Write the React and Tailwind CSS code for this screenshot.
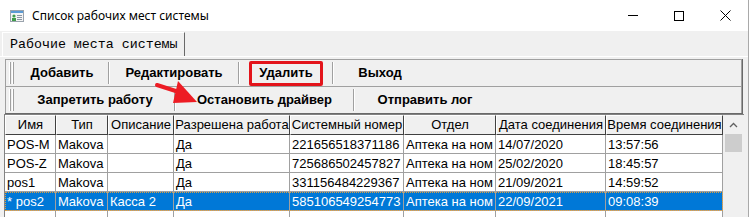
import React from 'react';

const COLS = [
  { title: 'Имя', w: 51 },
  { title: 'Тип', w: 52 },
  { title: 'Описание', w: 66 },
  { title: 'Разрешена работа', w: 116 },
  { title: 'Системный номер', w: 114 },
  { title: 'Отдел', w: 92 },
  { title: 'Дата соединения', w: 110 },
  { title: 'Время соединения', w: 117 },
];

const ROWS = [
  ['POS-M', 'Makova', '', 'Да', '221656518371186', 'Аптека на ном', '14/07/2020', '13:57:56'],
  ['POS-Z', 'Makova', '', 'Да', '725686502457827', 'Аптека на ном', '25/02/2020', '18:45:57'],
  ['pos1', 'Makova', '', 'Да', '331156484229367', 'Аптека на ном', '21/09/2021', '14:59:52'],
  ['* pos2', 'Makova', 'Касса 2', 'Да', '585106549254773', 'Аптека на ном', '22/09/2021', '09:08:39'],
  ['', '', '', '', '', '', '', ''],
];

function Handle() {
  return (
    <div className="flex h-full items-center gap-[1px] pl-[3px] pr-[2px]">
      <div className="h-[22px] w-[2px] border-l border-r border-l-white border-r-[#a0a0a0]" />
      <div className="h-[22px] w-[2px] border-l border-r border-l-white border-r-[#a0a0a0]" />
    </div>
  );
}

function Sep() {
  return <div className="h-[22px] w-[2px] border-l border-r border-l-[#a0a0a0] border-r-white" />;
}

function ToolButton({ w, children, marked }) {
  return (
    <div className="flex h-full items-center justify-center" style={{ width: w }}>
      <span
        className={
          marked
            ? 'flex h-[25px] w-[74px] items-center justify-center rounded-[2px] border-[3px] border-[#e3141b]'
            : ''
        }
      >
        {children}
      </span>
    </div>
  );
}

function TitleIcon() {
  return (
    <svg width="16" height="16" viewBox="0 0 16 16">
      <rect x="1.5" y="2.5" width="13" height="11" fill="#f4f4f4" stroke="#9aa3ad" />
      <rect x="2" y="3" width="12" height="2" fill="#5b9bd5" />
      <rect x="8" y="7" width="5" height="1" fill="#8a96a3" />
      <rect x="8" y="9" width="5" height="1" fill="#8a96a3" />
      <rect x="8" y="11" width="5" height="1" fill="#8a96a3" />
      <circle cx="5" cy="8" r="1.6" fill="#3f9b4a" />
      <rect x="3" y="10" width="4" height="3" fill="#3f9b4a" />
    </svg>
  );
}

export default function App() {
  return (
    <div className="relative h-[217px] w-[749px] overflow-hidden border-r border-[#a9a9a9] bg-[#f0f0f0] text-black">
      {/* title bar */}
      <div className="flex h-[31px] items-center bg-white font-['Noto_Sans',sans-serif] text-[12px]">
        <div className="ml-[9px] mr-[7px] flex items-center">
          <TitleIcon />
        </div>
        <span className="leading-none">Список рабочих мест системы</span>
        <div className="ml-auto flex h-full items-center">
          <div className="flex h-full w-[46px] items-center justify-center">
            <div className="h-[1px] w-[10px] bg-black" />
          </div>
          <div className="flex h-full w-[46px] items-center justify-center">
            <div className="h-[10px] w-[10px] border border-black" />
          </div>
          <div className="flex h-full w-[46px] items-center justify-center">
            <svg width="11" height="11" viewBox="0 0 11 11">
              <path d="M0.5 0.5 L10.5 10.5 M10.5 0.5 L0.5 10.5" stroke="#000" strokeWidth="1" />
            </svg>
          </div>
        </div>
      </div>

      {/* tab strip */}
      <div className="flex h-[25px] items-end pl-[2px]">
        <div className="flex h-[24px] items-center border-l border-t border-r border-l-white border-t-white border-r-[#696969] pl-[7px] pr-[6px] font-['Liberation_Mono',monospace] text-[13.3px]">
          Рабочие места системы
        </div>
      </div>

      {/* tab page */}
      <div className="border-t border-white px-[4px] pt-[2px]">
        {/* toolbar */}
        <div className="ml-[1px] mr-[1px] border-b border-r border-b-[#696969] border-r-[#696969] font-['Liberation_Sans',sans-serif] text-[13px] font-bold">
          <div className="flex h-[27px] items-center border border-b-0 border-[#a0a0a0]">
            <Handle />
            <ToolButton w={92}>Добавить</ToolButton>
            <Sep />
            <ToolButton w={128}>Редактировать</ToolButton>
            <Sep />
            <ToolButton w={92} marked>Удалить</ToolButton>
            <Sep />
            <ToolButton w={92}>Выход</ToolButton>
          </div>
          <div className="flex h-[27px] items-center border border-b-0 border-[#a0a0a0]">
            <Handle />
            <ToolButton w={158}>Запретить работу</ToolButton>
            <Sep />
            <ToolButton w={177}>Остановить драйвер</ToolButton>
            <Sep />
            <ToolButton w={140}>Отправить лог</ToolButton>
          </div>
        </div>

        {/* grid */}
        <div className="flex border-l border-t border-[#828282] bg-[#f0f0f0] font-['Liberation_Sans',sans-serif] text-[13px]">
          <div className="flex flex-col">
            <div className="flex h-[20px]">
              {COLS.map((c) => (
                <div
                  key={c.title}
                  className="flex items-center justify-center overflow-hidden whitespace-nowrap border-b border-l border-r border-t border-b-[#404040] border-l-white border-r-[#404040] border-t-white"
                  style={{ width: c.w }}
                >
                  {c.title}
                </div>
              ))}
            </div>
            {ROWS.map((row, ri) => {
              const selected = ri === 3;
              return (
                <div
                  key={ri}
                  className={`flex h-[19px] ${selected ? 'bg-[#0078d7] text-white outline-1 outline-dotted outline-offset-[-1px] outline-[#e0a040]' : 'bg-white'}`}
                >
                  {row.map((cell, ci) => (
                    <div
                      key={ci}
                      className="flex items-center overflow-hidden whitespace-nowrap border-b border-r border-[#a0a0a0] pl-[2px] leading-none"
                      style={{ width: COLS[ci].w }}
                    >
                      {cell}
                    </div>
                  ))}
                </div>
              );
            })}
          </div>
          {/* scrollbar */}
          <div className="ml-[2px] flex w-[17px] flex-col bg-[#f0f0f0]">
            <div className="flex h-[19px] items-center justify-center">
              <svg width="9" height="6" viewBox="0 0 9 6">
                <path d="M1 5 L4.5 1.5 L8 5" fill="none" stroke="#606060" strokeWidth="1.3" />
              </svg>
            </div>
            <div className="h-[18px] bg-[#cdcdcd]" />
          </div>
        </div>
      </div>

      {/* annotation arrow */}
      <svg className="pointer-events-none absolute left-0 top-0" width="749" height="217">
        <path d="M157 85 L182 93" stroke="#ed1c24" strokeWidth="4" strokeLinecap="round" />
        <polygon points="178,81 173,103 197,102" fill="#ed1c24" />
      </svg>
    </div>
  );
}
